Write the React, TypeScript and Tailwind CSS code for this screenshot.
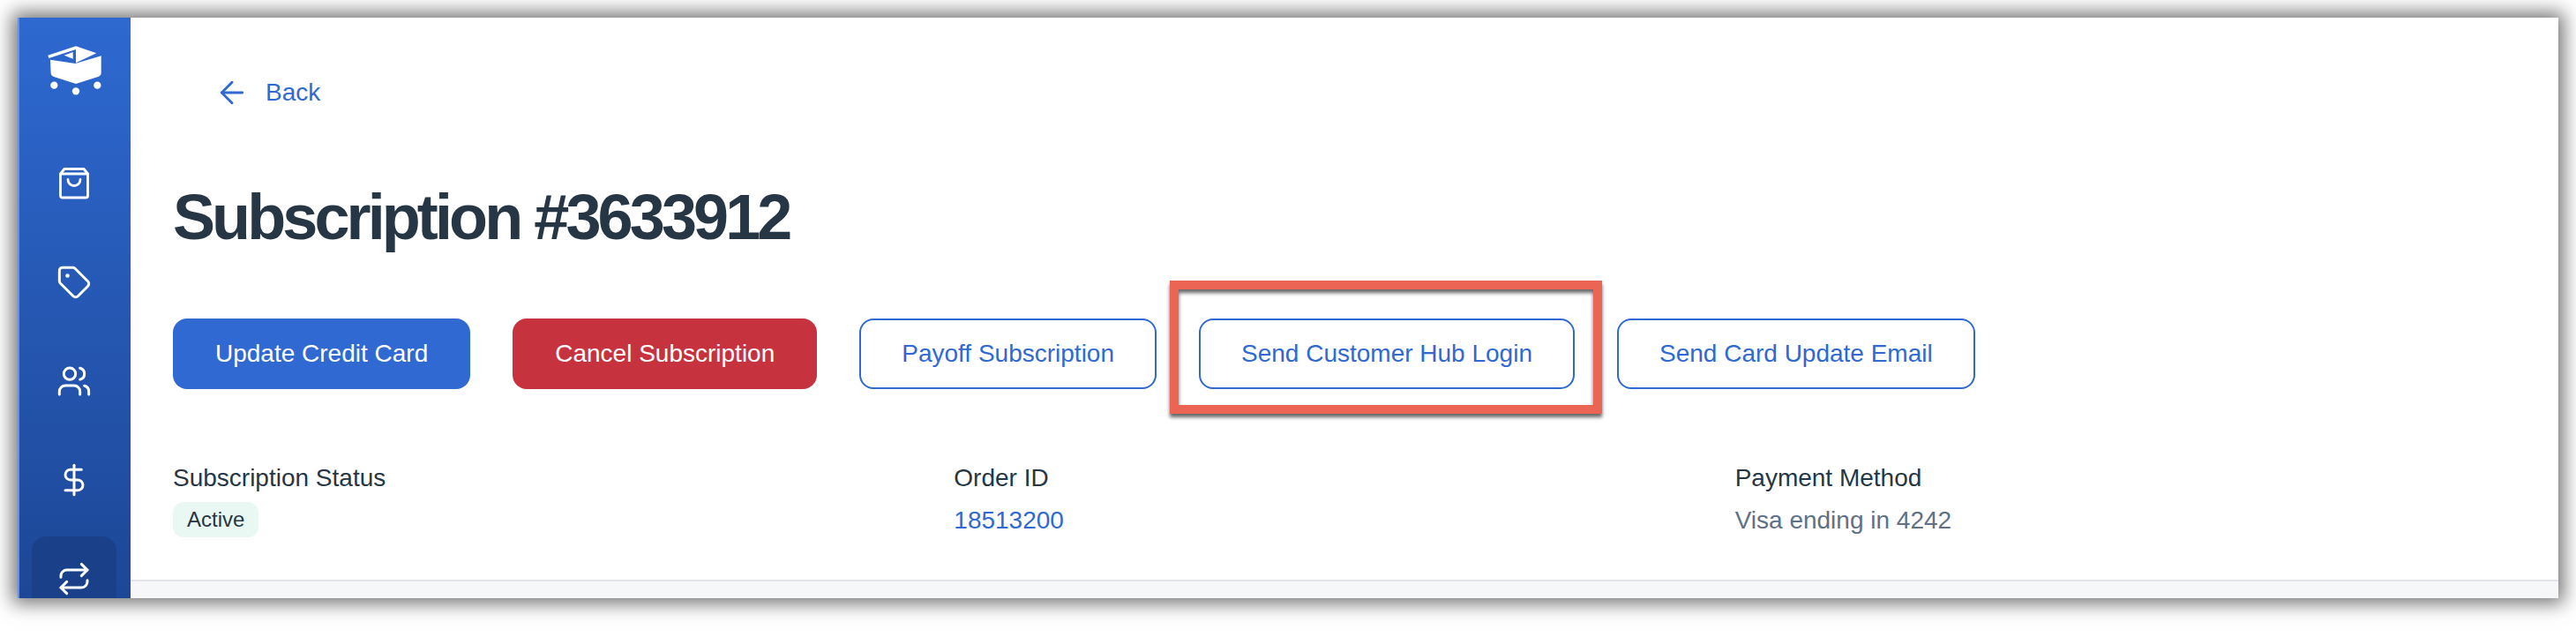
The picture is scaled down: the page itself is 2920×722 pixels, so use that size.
import { ArrowLeft, DollarSign, Repeat, Tag, Users } from "lucide-react"

const BagIcon = () => (
  <svg width="40" height="40" viewBox="0 0 40 40" fill="none" stroke="white" strokeWidth="2.8" strokeLinecap="round" strokeLinejoin="round">
    <path d="M9 3.5H31L35.5 9V34a2 2 0 0 1-2 2H6.5a2 2 0 0 1-2-2V9Z" />
    <path d="M5 9H35" />
    <path d="M13 15.5a7 7 0 0 0 14 0" />
  </svg>
)

const Logo = () => (
  <svg className="shrink-0" width="65" height="60" viewBox="150 150 195 180" fill="white">
    <path d="M252 157L157 188L160 198L252 168Z" />
    <path d="M252 157V214L322 181Z" />
    <path d="M165 203L250 216L338 190V250Q338 258 330 260L252 285L175 260Q167 258 167 250Z" />
    <path d="M212 188L242 177V200Z" />
    <circle cx="178" cy="290" r="12.5" />
    <circle cx="252" cy="310" r="12.5" />
    <circle cx="325" cy="290" r="12.5" />
  </svg>
)

const navItems = [
  { icon: <BagIcon /> },
  { icon: <Tag size={40} strokeWidth={1.8} /> },
  { icon: <Users size={40} strokeWidth={1.8} /> },
  { icon: <DollarSign size={40} strokeWidth={1.8} /> },
  { icon: <Repeat size={40} strokeWidth={1.8} />, active: true },
]

function Sidebar() {
  return (
    <aside className="flex w-[128px] shrink-0 flex-col items-center overflow-hidden border-l-2 border-[#6b8fdb] bg-gradient-to-b from-[#2e69d1] to-[#1d4796] pt-[30px] pr-0.5 text-white">
      <Logo />
      <nav className="mt-[50px] flex flex-col gap-4">
        {navItems.map((item, i) => (
          <div
            key={i}
            className={`flex h-24 w-24 shrink-0 items-center justify-center rounded-2xl ${item.active ? "bg-[#1b408a]" : ""}`}
          >
            {item.icon}
          </div>
        ))}
      </nav>
    </aside>
  )
}

export default function App() {
  return (
    <div className="h-[722px] bg-white p-5 font-['Liberation_Sans',Arial,sans-serif]">
      <div className="flex h-[658px] bg-white shadow-[0_0_20px_6px_rgba(0,0,0,0.55)]">
        <Sidebar />
        <main className="flex min-w-0 flex-1 flex-col">
          <div className="flex-1 px-12 pt-[65px]">
            <a className="ml-[47px] flex h-10 items-center gap-[18px] text-[28px] text-[#2f69d1]">
              <ArrowLeft size={40} strokeWidth={1.7} />
              Back
            </a>

            <h1 className="mt-[81px] text-[72px] leading-[80px] font-bold tracking-[-3.9px] text-[#263645]">
              Subscription #3633912
            </h1>

            <div className="mt-[75px] flex gap-12 text-[28px]">
              <button className="h-20 rounded-2xl bg-[#2f69d1] px-12 text-white">Update Credit Card</button>
              <button className="h-20 rounded-2xl bg-[#c7323f] px-12 text-white">Cancel Subscription</button>
              <button className="h-20 rounded-2xl border-2 border-[#2f69d1] px-[46px] text-[#2f69d1]">Payoff Subscription</button>
              <div className="relative">
                <button className="h-20 rounded-2xl border-2 border-[#2f69d1] px-[46px] text-[#2f69d1]">Send Customer Hub Login</button>
                <div className="pointer-events-none absolute -top-[43px] -right-[31px] -bottom-[28px] -left-[33px] border-[10px] border-[#ec6453] shadow-[0_4px_4px_rgba(0,0,0,0.6),inset_0_4px_4px_rgba(0,0,0,0.6)]" />
              </div>
              <button className="h-20 rounded-2xl border-2 border-[#2f69d1] px-[46px] text-[#2f69d1]">Send Card Update Email</button>
            </div>

            <div className="mt-[81px] grid grid-cols-3 text-[28px] leading-10 text-[#263645]">
              <div>
                <div>Subscription Status</div>
                <span className="mt-[7px] block w-fit rounded-xl bg-[#e9f8f3] px-4 text-[24px]">Active</span>
              </div>
              <div>
                <div>Order ID</div>
                <a className="mt-2 block text-[#2f69d1]">18513200</a>
              </div>
              <div>
                <div>Payment Method</div>
                <div className="mt-2 text-[#5e7186]">Visa ending in 4242</div>
              </div>
            </div>
          </div>
          <div className="h-[21px] border-t-2 border-[#e1e4ec] bg-[#f6f7f9]" />
        </main>
      </div>
    </div>
  )
}
